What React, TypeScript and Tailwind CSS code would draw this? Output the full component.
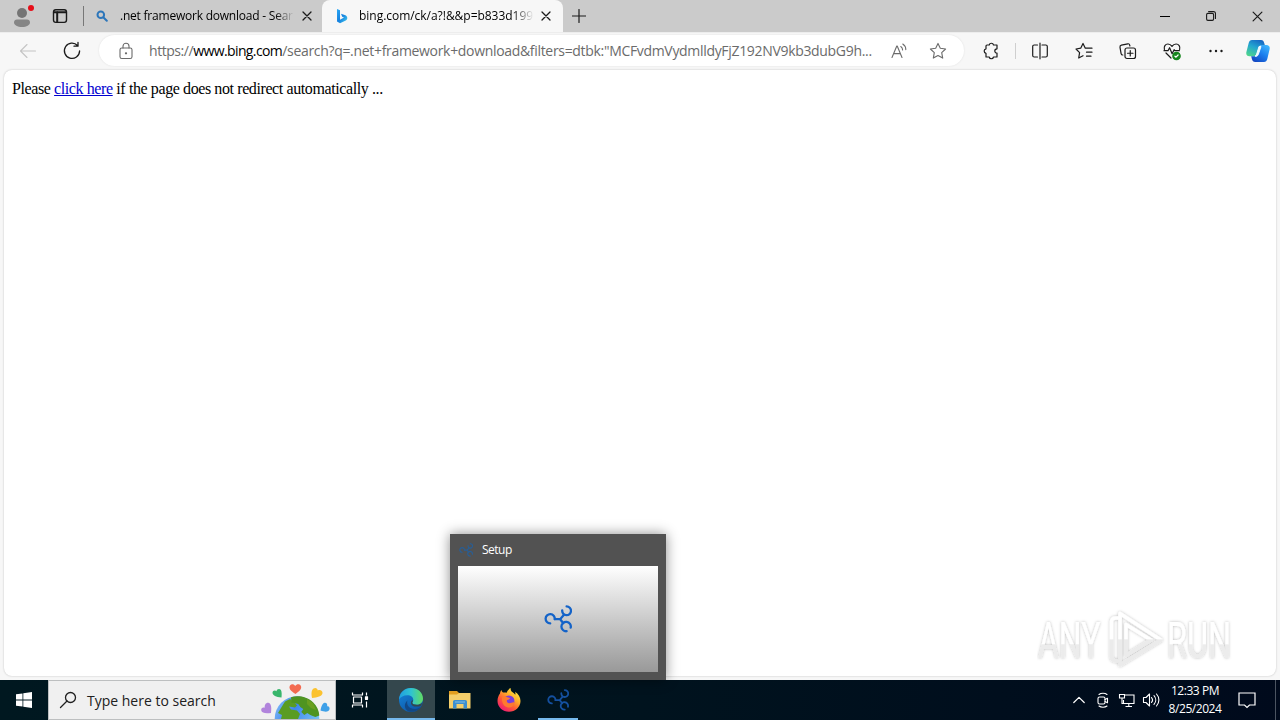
import type { ReactNode } from "react";
import clsx from "clsx";

interface IconProps {
    size?: number;
    className?: string;
    stroke?: number;
    viewBox?: string;
    children: ReactNode;
}

function Icon({ size = 20, className, stroke = 1.1, viewBox = "0 0 20 20", children }: IconProps) {
    return (
        <svg
            width={size}
            height={size}
            viewBox={viewBox}
            fill="none"
            stroke="currentColor"
            strokeWidth={stroke}
            strokeLinecap="round"
            strokeLinejoin="round"
            className={clsx("shrink-0", className)}
        >
            {children}
        </svg>
    );
}

function CloseIcon({ size = 10, stroke = 1.3 }: { size?: number; stroke?: number }) {
    return (
        <Icon size={size} viewBox="0 0 10 10" stroke={stroke}>
            <path d="M1 1l8 8M9 1L1 9" />
        </Icon>
    );
}

function SetupIcon({ size, color }: { size: number; color: string }) {
    return (
        <svg width={size} height={size} viewBox="0 0 28 28" fill="none" stroke={color} strokeWidth="2.3" strokeLinecap="round" className="shrink-0">
            <path d="M10.8 14.2H16.2L20 9.8M16.2 14.2L19.3 18.2" />
            <path d="M6.2 18.4A4.6 4.6 0 1 1 10.8 14.2" />
            <path d="M18.2 5.4A4.4 4.4 0 1 0 22.6 1.4" />
            <path d="M22.6 26.2A4.7 4.7 0 1 1 26.7 22.6" />
        </svg>
    );
}

function BingIcon() {
    return (
        <svg width="12" height="16" viewBox="0 0 12 16" className="shrink-0">
            <defs>
                <linearGradient id="bing" x1="0" y1="0" x2="1" y2="1">
                    <stop offset="0" stopColor="#2aa9f5" />
                    <stop offset="0.5" stopColor="#1680df" />
                    <stop offset="1" stopColor="#45d1ef" />
                </linearGradient>
            </defs>
            <path d="M1 1l3 1.2v9.6L8 9.5 6.2 8.7 5 5.7l4.4 1.5c1.2.6 1.9 1.6 1.9 2.8 0 1.1-.6 1.9-1.5 2.5L4 15.3 1 13.5z" fill="url(#bing)" />
        </svg>
    );
}

function CopilotIcon() {
    return (
        <svg width="24" height="22" viewBox="0 0 24 22" className="shrink-0">
            <defs>
                <linearGradient id="cpa" x1="0.7" y1="0" x2="0.2" y2="1">
                    <stop offset="0" stopColor="#1768c4" />
                    <stop offset="0.45" stopColor="#23a6d0" />
                    <stop offset="1" stopColor="#4ed58c" />
                </linearGradient>
                <linearGradient id="cpb" x1="0.9" y1="0" x2="0.2" y2="1">
                    <stop offset="0" stopColor="#40b9ff" />
                    <stop offset="0.5" stopColor="#1b7fee" />
                    <stop offset="1" stopColor="#1345c0" />
                </linearGradient>
            </defs>
            <path d="M6 0h9c2 0 2.700 1.200 3.200 3l.6 2h-3c-1.600 0-2.500.9-3 2.500L10.700 14c-.6 1.600-1.500 2.300-3 2.300H3.500C1 16.300-.2 14.500.4 12L2.700 3C3.200 1.100 4.300 0 6 0z" fill="url(#cpa)" />
            <path d="M18 22H9.300c-2 0-2.900-1.200-3.400-3l-.7-2.700h2.500c1.500 0 2.400-.7 3-2.300l2.100-6.500C13.300 5.900 14.200 5 15.800 5H20.500c2.500 0 3.700 1.900 3.100 4.300L21.300 19c-.5 1.900-1.600 3-3.300 3z" fill="url(#cpb)" />
            <path d="M13 6.500h2L12.300 14.500c-.3.800-.8 1.400-1.500 1.700H9c.9-.4 1.400-1.100 1.700-2.200z" fill="#eefaff" stroke="#eefaff" strokeWidth="1" />
        </svg>
    );
}

function EdgeIcon() {
    return (
        <svg width="26" height="26" viewBox="0 0 26 26" className="shrink-0">
            <defs>
                <linearGradient id="edgeTop" x1="0" y1="0.4" x2="1" y2="0.4">
                    <stop offset="0" stopColor="#1f9ee0" />
                    <stop offset="0.5" stopColor="#2fc3d2" />
                    <stop offset="1" stopColor="#62dc61" />
                </linearGradient>
                <linearGradient id="edgeBlue" x1="0" y1="0" x2="0.7" y2="1">
                    <stop offset="0" stopColor="#1687dc" />
                    <stop offset="1" stopColor="#0d55a5" />
                </linearGradient>
            </defs>
            <circle cx="13" cy="13" r="12" fill="url(#edgeBlue)" />
            <path d="M1 12.500C1.500 5.500 6.500 1 13 1c7 0 12 4.700 12 10.500 0 4-3 6.300-6.300 6.300-3 0-4.400-1-4.400-2 0-.7 1-1.200 1-3 0-2.500-2.400-4.600-6-4.600C5.500 8.200 2.500 9.800 1 12.500z" fill="url(#edgeTop)" />
            <path d="M9.400 13.500c-1.400 5.500 3.100 9.500 9.600 8.200 1.800-.4 3-1.200 4-2.100-2.500 4.300-7.500 6-12 4.900-4.600-1.800-5.600-7.500-1.600-11z" fill="#124886" />
            <path d="M14.300 15.800c0 1 1.400 2 4.400 2 2.300 0 4-.7 5.300-2.100-.2 1.300-.5 2.300-1 3-4 1.900-10 .8-10-2.800 0-1.400.7-2.500 1.700-2.900.6 1-.4 1.900-.4 2.800z" fill="#34474d" />
        </svg>
    );
}

function FolderIcon() {
    return (
        <svg width="22" height="20" viewBox="0 0 22 20" className="shrink-0">
            <path d="M0 1h8l2 2h11v4H0z" fill="#e4a021" />
            <path d="M0 4.500h8L10 3h11.500v15.500H0z" fill="#f5cf6b" />
            <path d="M4 18.500v-6.700C4 10.800 4.700 10 5.700 10h10.600c1 0 1.700.8 1.700 1.800v6.700h-3.500V14h-7v4.500z" fill="#3d8fd0" />
            <path d="M6 12h10" stroke="#82bde4" strokeWidth="1" />
        </svg>
    );
}

function FirefoxIcon() {
    return (
        <svg width="24" height="24" viewBox="0 0 24 24" className="shrink-0">
            <defs>
                <linearGradient id="fox" x1="0.85" y1="0.05" x2="0.2" y2="0.95">
                    <stop offset="0" stopColor="#fff04b" />
                    <stop offset="0.35" stopColor="#ffb129" />
                    <stop offset="0.65" stopColor="#ff5a36" />
                    <stop offset="1" stopColor="#ef1975" />
                </linearGradient>
            </defs>
            <path d="M3 5.500C3.200 4 3.700 2.700 4.500 2c.1 1 .6 1.900 1.500 2.600 1.400-.4 2.700-.2 3.700.2C10 3 11.500 1 13.700.1c-.2 2.600 1 3.600 2.600 4.600.9.600 1.500 1.300 1.900 2 .4-.9.300-2-.2-3C21.400 6 23.500 9 23.500 13c0 6-5.200 10.800-11.500 10.800S.5 19 .5 13C.5 10 1.500 7.500 3 5.500z" fill="url(#fox)" />
            <circle cx="12" cy="13" r="5.600" fill="#7a3fdb" />
            <path d="M5 9.500c2-1.500 4-1.200 5.300-.2l2.700.7c-.3 1.200-1.300 1.700-3 2-.6 1.700.4 3 2 3.300 2.300.3 3.500-1.600 5.300-.8C17 18 14.500 20 11 19.500 7 19 4.500 15 5 9.500z" fill="#ff7a2f" />
            <path d="M14.200 7.200c2.900 1.300 4.300 4.200 3.300 7.400 1.500-2.600 1-6-.7-7.700z" fill="#ffbf38" />
        </svg>
    );
}

function EarthDoodle() {
    return (
        <svg width="76" height="38" viewBox="0 0 76 38" className="shrink-0">
            <defs>
                <linearGradient id="sea" x1="0" y1="0" x2="1" y2="0.6">
                    <stop offset="0" stopColor="#8cc4f8" />
                    <stop offset="0.45" stopColor="#3f86ec" />
                    <stop offset="1" stopColor="#7cc7f2" />
                </linearGradient>
            </defs>
            <g transform="translate(2 0)">
                <circle cx="36" cy="37.500" r="22.300" fill="url(#sea)" />
                <path d="M30 16.200c7-2 16-.7 22 5 4 4 6 8.500 6.300 13.300l-4 1.500-5-2-3-2-3 2-3-3 2-3-3-2-2-3-4-1-2 1-3-2 2-2z" fill="#4f9420" />
                <path d="M20 27l4-6.500 5-2.500 2 1.500-1 2 4 .5 2 2.500-2 2-6-1 2 3 6 1 3 3.500-2 5H20l1-4-4-2z" fill="#5a9c22" />
                <path d="M46 18l6 4 3 7-5-2-4-4z" fill="#6a9f1f" />
            </g>
            <g transform="translate(4.500 0)">
                <path d="M32 13c-5.500-3.500-7-6-5.500-8.500 1.500-2 4-1.500 5.200.4 1.600-2.200 4.800-2.200 5.800.4 1 2.700-2 5.200-5.500 7.700z" fill="#f36b51" />
                <path d="M18 16.500c-5.500-.5-8.800-2-9-4.700 0-2 2.500-2.900 4-1.500.3-2.400 3.200-3.200 4.400-1.200 1 1.700.9 4.700.6 7.400z" fill="#38b66b" />
                <path d="M48.500 17c-.8-4.500-.7-8 1.500-9.500 2-1.200 4.100-.2 4.300 1.900 2.200-1.200 5.200.3 4.700 2.900-.5 3-5 4.300-10.500 4.700z" fill="#fbc22f" />
                <path d="M7.500 32c-5 .8-9.300.3-9.800-2.700-.3-2 1.500-3.600 3.600-2.600-.6-3.200 1.700-5.700 4.200-4.700 2.700 1.200 2.500 6 2 10z" fill="#b184dc" />
                <path d="M57 29.500c.8-4 2-7.500 4.200-7.700 2-.1 3 1.700 2.400 3.500 2-.2 3.300 2 2 4-1.300 2-5 1.500-8.600.2z" fill="#3ea0e8" />
            </g>
        </svg>
    );
}

function Watermark() {
    return (
        <svg width="220" height="66" viewBox="0 0 220 66" className="absolute right-[23px] bottom-[7px]">
            <defs>
                <filter id="soft" x="-10%" y="-20%" width="120%" height="140%">
                    <feDropShadow dx="0" dy="0" stdDeviation="1.6" floodColor="#000" floodOpacity="0.28" />
                </filter>
                <linearGradient id="wm" x1="0" y1="0" x2="0" y2="1">
                    <stop offset="0.55" stopColor="#fff" />
                    <stop offset="0.57" stopColor="#ececec" />
                </linearGradient>
                <linearGradient id="wmLine" gradientUnits="userSpaceOnUse" x1="0" y1="0" x2="0" y2="66">
                    <stop offset="0.48" stopColor="#fff" />
                    <stop offset="0.5" stopColor="#ebebeb" />
                </linearGradient>
            </defs>
            <g filter="url(#soft)">
                <g fill="url(#wm)" fontFamily="Roboto, sans-serif" fontSize="50">
                    <text transform="translate(1 51) scale(0.64 1)">ANY</text>
                    <text transform="translate(130 51) scale(0.65 1)">RUN</text>
                </g>
                <g fill="none" stroke="url(#wmLine)" strokeWidth="3.500" strokeLinejoin="round" strokeLinecap="round">
                    <path d="M83 6.500V58L124 33z" />
                    <path d="M83 11H79c-3 0-4.500 1.500-4.500 4V50c0 2 1 3 3 3.500l3 .5" />
                    <path d="M89 17.500V48.500L114 33z" />
                </g>
            </g>
        </svg>
    );
}

function TabStrip() {
    return (
        <div className="flex h-8 items-stretch bg-[#cbcbcb] text-[#1b1b1b]">
            <div className="flex w-11 items-center justify-center">
                <svg width="26" height="26" viewBox="0 0 26 26">
                    <circle cx="13" cy="10" r="5" fill="#757575" />
                    <path d="M5 19.500c0-2 1.200-3 3-3h10c1.800 0 3 1 3 3 0 2.700-3.500 4.500-8 4.500s-8-1.800-8-4.500z" fill="#858585" />
                    <circle cx="22" cy="5" r="3" fill="#e60e19" />
                </svg>
            </div>
            <div className="flex w-[39px] items-center pl-2">
                <Icon size={16} viewBox="0 0 16 16" stroke={1.4}>
                    <rect x="1.500" y="1.800" width="13" height="12.600" rx="2.300" />
                    <path d="M2 4.200h12M5.200 4v10" strokeWidth="2" />
                </Icon>
            </div>
            <div className="my-1.5 w-px bg-[#777]" />
            <div className="flex w-[238px] items-center pl-3">
                <Icon size={12} viewBox="0 0 12 12" stroke={2} className="text-[#2d76ba]">
                    <circle cx="4.800" cy="4.800" r="3.300" />
                    <path d="M7.500 7.500l3.300 3.300" />
                </Icon>
                <span className="ml-3 w-[174px] overflow-hidden font-['Open_Sans',sans-serif] text-xs tracking-[-0.22px] whitespace-nowrap text-black [mask-image:linear-gradient(to_right,black_155px,transparent_174px)]">
                    .net framework download - Sear
                </span>
                <span className="ml-2">
                    <CloseIcon />
                </span>
            </div>
            <div className="flex w-[241px] items-center rounded-t-lg bg-[#f7f7f7] pl-3.5">
                <BingIcon />
                <span className="ml-[11px] w-[174px] overflow-hidden font-['Open_Sans',sans-serif] text-xs tracking-[-0.03px] whitespace-nowrap text-black [mask-image:linear-gradient(to_right,black_153px,transparent_175px)]">
                    bing.com/ck/a?!&amp;&amp;p=b833d199
                </span>
                <span className="ml-2">
                    <CloseIcon />
                </span>
            </div>
            <div className="flex w-8 items-center justify-center">
                <Icon size={14} viewBox="0 0 14 14" stroke={1.2}>
                    <path d="M7 .5v13M.5 7h13" />
                </Icon>
            </div>
            <div className="ml-auto flex">
                <div className="flex w-[46px] items-center justify-center">
                    <div className="h-px w-2.5 bg-black" />
                </div>
                <div className="flex w-[46px] items-center justify-center">
                    <Icon size={10} viewBox="0 0 10 10" stroke={1.1}>
                        <rect x="0.600" y="2.400" width="7" height="7" rx="1.300" />
                        <path d="M2.600.6H7.500c1.200 0 2 .8 2 2v4.800" />
                    </Icon>
                </div>
                <div className="flex w-[46px] items-center justify-center">
                    <CloseIcon size={11} stroke={1.1} />
                </div>
            </div>
        </div>
    );
}

function Toolbar() {
    return (
        <div className="flex h-9 items-center border-t border-[#ededed] bg-[#f7f7f7] text-[#1b1b1b]">
            <div className="flex w-14 justify-center">
                <Icon className="text-[#c4c4c4]" size={20}>
                    <path d="M17.500 10H2.500M9 3.500L2.500 10 9 16.500" />
                </Icon>
            </div>
            <div className="flex w-8 justify-center">
                <Icon size={20} stroke={1.3}>
                    <path d="M15.500 4.500A7.600 7.600 0 1 0 17.600 10M16 1.500V5.200H12" />
                </Icon>
            </div>
            <div className="ml-[11px] flex h-[31px] w-[865px] items-center rounded-full bg-white pl-[18px] text-[#6b6b6b] shadow-[0_0_2px_#dedede]">
                <Icon size={18} viewBox="0 0 18 18" stroke={1.1}>
                    <rect x="3" y="6" width="12" height="10.500" rx="1.800" />
                    <path d="M6 6V4.200a3 3 0 0 1 6 0V6" />
                    <circle cx="9" cy="11.300" r="0.600" fill="currentColor" />
                </Icon>
                <span className="ml-3.5 w-[726px] font-['Open_Sans',sans-serif] text-sm tracking-[-0.32px] whitespace-nowrap">
                    <span className="tracking-[-0.45px]">https://</span>
                    <span className="tracking-[-0.6px] text-black">www.bing.com</span>
                    /search?q=.net+framework+download&amp;filters=dtbk:"MCFvdmVydmlldyFjZ192NV9kb3dubG9h...
                </span>
                <Icon size={18} viewBox="0 0 18 18" className="ml-[15px]" stroke={1.1}>
                    <path d="M2 15.500L6.800 4h.4L12 15.500M3.700 11.600h6.600M10.800 4.500c1.200.8 1.800 2 1.800 3.400M12.800 2c2 1.300 3 3.300 3 5.600" />
                </Icon>
                <Icon size={18} viewBox="0 0 18 18" className="ml-[21px]">
                    <path d="M9 1.400l2.300 4.900 5.300.7-3.900 3.700 1 5.400L9 13.500l-4.700 2.600 1-5.400L1.400 7l5.300-.7z" />
                </Icon>
            </div>
            <div className="ml-[17px] flex items-center">
                <Icon stroke={1.2}>
                    <path d="M6 4h2.200a2.200 2.200 0 0 1 4.300 0H16v3.800a2.200 2.200 0 0 0 0 4.400V16h-3.500a2.200 2.200 0 0 1-4.300 0H5v-3.700a2.300 2.300 0 0 1 0-4.500V5a1 1 0 0 1 1-1z" />
                </Icon>
                <div className="ml-3.5 h-4 w-px bg-[#cfcfcf]" />
                <Icon className="ml-3.5" stroke={1.2}>
                    <path d="M7.500 4H4.200C3.300 4 2.700 4.600 2.700 5.500v9c0 .9.600 1.500 1.500 1.500h3.300M12 4h3.800c.9 0 1.500.6 1.500 1.500v9c0 .9-.6 1.500-1.500 1.500H12M10 2.200v15.600" />
                </Icon>
                <Icon className="ml-6" stroke={1.2}>
                    <path d="M11.300 7.200L9 2.500 6.700 7.200 2 8l3.600 3.600L4.700 17 9 14.700M11.300 7.200H18M12.500 11.200H18M12.500 15.200H17" />
                </Icon>
                <Icon className="ml-6" stroke={1.2}>
                    <path d="M4.800 14c-1 0-1.500-.5-1.700-1.400L2 6.300C1.800 5.200 2.400 4.400 3.400 4.200L9.800 2.800c1-.2 1.700.4 1.900 1.300l.2.900" />
                    <rect x="7" y="7" width="10.500" height="10.500" rx="2" />
                    <path d="M12.250 9.500v5.500M9.500 12.250H15" />
                </Icon>
                <Icon className="ml-6" stroke={1.2}>
                    <path d="M2.400 8.500c-.8-3 1-5.500 3.500-5.500C7.600 3 9 3.900 10 5.400 11 3.900 12.400 3 14.100 3c2.600 0 4.400 2.500 3.500 5.500M2 9.700h4l1.600-3 2.500 6 2-4 .8 1h4.500M4 12l5 5" />
                    <circle cx="14.500" cy="15" r="3.700" fill="#16851d" stroke="#16851d" />
                    <path d="M12.900 15.200l1.100 1 2.100-2.200" stroke="#fff" />
                </Icon>
                <Icon className="ml-6" stroke={0}>
                    <circle cx="4.500" cy="10" r="1.200" fill="currentColor" />
                    <circle cx="10" cy="10" r="1.200" fill="currentColor" />
                    <circle cx="15.500" cy="10" r="1.200" fill="currentColor" />
                </Icon>
                <div className="ml-5">
                    <CopilotIcon />
                </div>
            </div>
        </div>
    );
}

function SetupPreview() {
    return (
        <div className="absolute bottom-0 left-[450px] flex h-[146px] w-[216px] flex-col bg-[#525252] px-2 pb-2 shadow-[0_0_12px_rgba(0,0,0,0.45)]">
            <div className="flex h-8 items-center gap-2 font-['Open_Sans',sans-serif] text-xs text-white">
                <span className="flex w-4 justify-center">
                    <SetupIcon size={14} color="#285e96" />
                </span>
                <span className="font-medium tracking-[-0.5px]">Setup</span>
            </div>
            <div className="flex flex-1 items-center justify-center bg-gradient-to-b from-white to-[#999]">
                <SetupIcon size={28} color="#1463c8" />
            </div>
        </div>
    );
}

function TaskButton({ active, open, children }: { active?: boolean; open?: boolean; children: ReactNode }) {
    return (
        <div className={clsx("flex h-10 w-12 flex-col items-center", active && "bg-[#34474d]")}>
            <div className="flex flex-1 items-center">{children}</div>
            <div className={clsx("-mt-0.5 h-0.5", active ? "w-12 bg-[#76b9ed]" : "w-10", open && "bg-[#76b9ed]")} />
        </div>
    );
}

function Taskbar() {
    return (
        <div className="flex h-10 items-stretch bg-gradient-to-r from-[#001820] via-[#00131e] to-[#000a1c] text-white">
            <div className="flex w-12 items-center justify-center">
                <svg width="16" height="16" viewBox="0 0 16 16" fill="#fff">
                    <path d="M0 2.300L6.500 1.400v6.200H0zM7.300 1.300L16 0v7.600H7.300zM0 8.400h6.500v6.200L0 13.700zM7.300 8.400H16V16l-8.700-1.300z" />
                </svg>
            </div>
            <div className="flex w-72 items-center border border-[#bdbfc0] bg-[#f0f0f0] pl-2.5 text-[#202020]">
                <Icon size={18} viewBox="0 0 18 18" stroke={1.3}>
                    <circle cx="11.500" cy="6.500" r="5" />
                    <path d="M8 10L1.500 16.500" />
                </Icon>
                <span className="ml-[10px] w-[174px] pt-px font-['Open_Sans',sans-serif] text-sm whitespace-nowrap">Type here to search</span>
                <EarthDoodle />
            </div>
            <div className="flex w-[51px] items-center pl-[15px]">
                <Icon size={18} viewBox="0 0 18 18" stroke={1.2}>
                    <path d="M1.500 1.500v2.500h10V1.500M1.500 16.500V14h10v2.500M2.500 6h8v6h-8zM15.500 1.500v3M15.500 10.500v6" strokeLinecap="butt" />
                    <rect x="14.500" y="5.800" width="2" height="2.500" fill="currentColor" />
                </Icon>
            </div>
            <TaskButton active>
                <EdgeIcon />
            </TaskButton>
            <div className="w-px" />
            <TaskButton>
                <FolderIcon />
            </TaskButton>
            <div className="w-px" />
            <TaskButton>
                <FirefoxIcon />
            </TaskButton>
            <div className="w-px" />
            <TaskButton open>
                <SetupIcon size={22} color="#1450a0" />
            </TaskButton>
            <div className="ml-auto flex items-center">
                <Icon size={12} viewBox="0 0 12 12" stroke={1.2}>
                    <path d="M.8 8.500L6 3.300l5.200 5.200" />
                </Icon>
                <Icon size={16} viewBox="0 0 16 16" className="ml-2.5">
                    <rect x="3" y="5" width="7" height="7" rx="1.500" />
                    <path d="M10 7.500l2.500-1.300v4.600L10 9.500M4 2.500C6 .8 10 .8 12 2.500M4 14c2 1.600 6 1.600 8 0" />
                </Icon>
                <Icon size={18} viewBox="0 0 18 18" className="ml-[7px]">
                    <path d="M6.500 4H16v8.500H5.500V9M10.800 12.500v3M7.500 15.500h6.500M1.500 3.500h5V7h-5zM4 7v5.500h1.500" strokeLinecap="butt" strokeLinejoin="miter" />
                </Icon>
                <Icon size={18} viewBox="0 0 18 18" className="ml-1.5">
                    <path d="M1.500 6.500h2.500L7.500 3v12L4 11.500H1.500zM9.500 6.500c1.300 1.500 1.300 3.500 0 5M12 4.700c2.300 2.500 2.300 6.100 0 8.600M14.500 3c3.200 3.500 3.200 8.500 0 12" />
                </Icon>
                <div className="ml-0.5 flex w-[66px] flex-col text-center font-['Open_Sans',sans-serif] text-xs leading-[18px] tracking-[-0.45px] whitespace-nowrap">
                    <span>12:33 PM</span>
                    <span>8/25/2024</span>
                </div>
                <Icon size={18} viewBox="0 0 18 18" className="ml-2.5" stroke={1.2}>
                    <path d="M1 2h16v12h-5.500L9 16.500 6.500 14H1z" strokeLinejoin="miter" />
                </Icon>
                <div className="ml-[19px] h-10 w-px bg-[#4b5461]" />
                <div className="w-1" />
            </div>
        </div>
    );
}

export default function App() {
    return (
        <div className="flex h-[720px] w-[1280px] flex-col overflow-hidden bg-[#f7f7f7]">
            <TabStrip />
            <Toolbar />
            <div className="relative flex flex-1 px-1 pt-0.5 pb-1">
                <main className="flex-1 rounded-lg bg-white px-2 pt-2.5 font-['Liberation_Serif',serif] text-base leading-[18px] text-black shadow-[0_0_2px_#bcbcbc]">
                    <p className="tracking-[-0.4px]">
                        Please <a className="text-[#0000d0] underline">click here</a> if the page does not redirect automatically ...
                    </p>
                </main>
                <Watermark />
                <SetupPreview />
            </div>
            <Taskbar />
        </div>
    );
}
